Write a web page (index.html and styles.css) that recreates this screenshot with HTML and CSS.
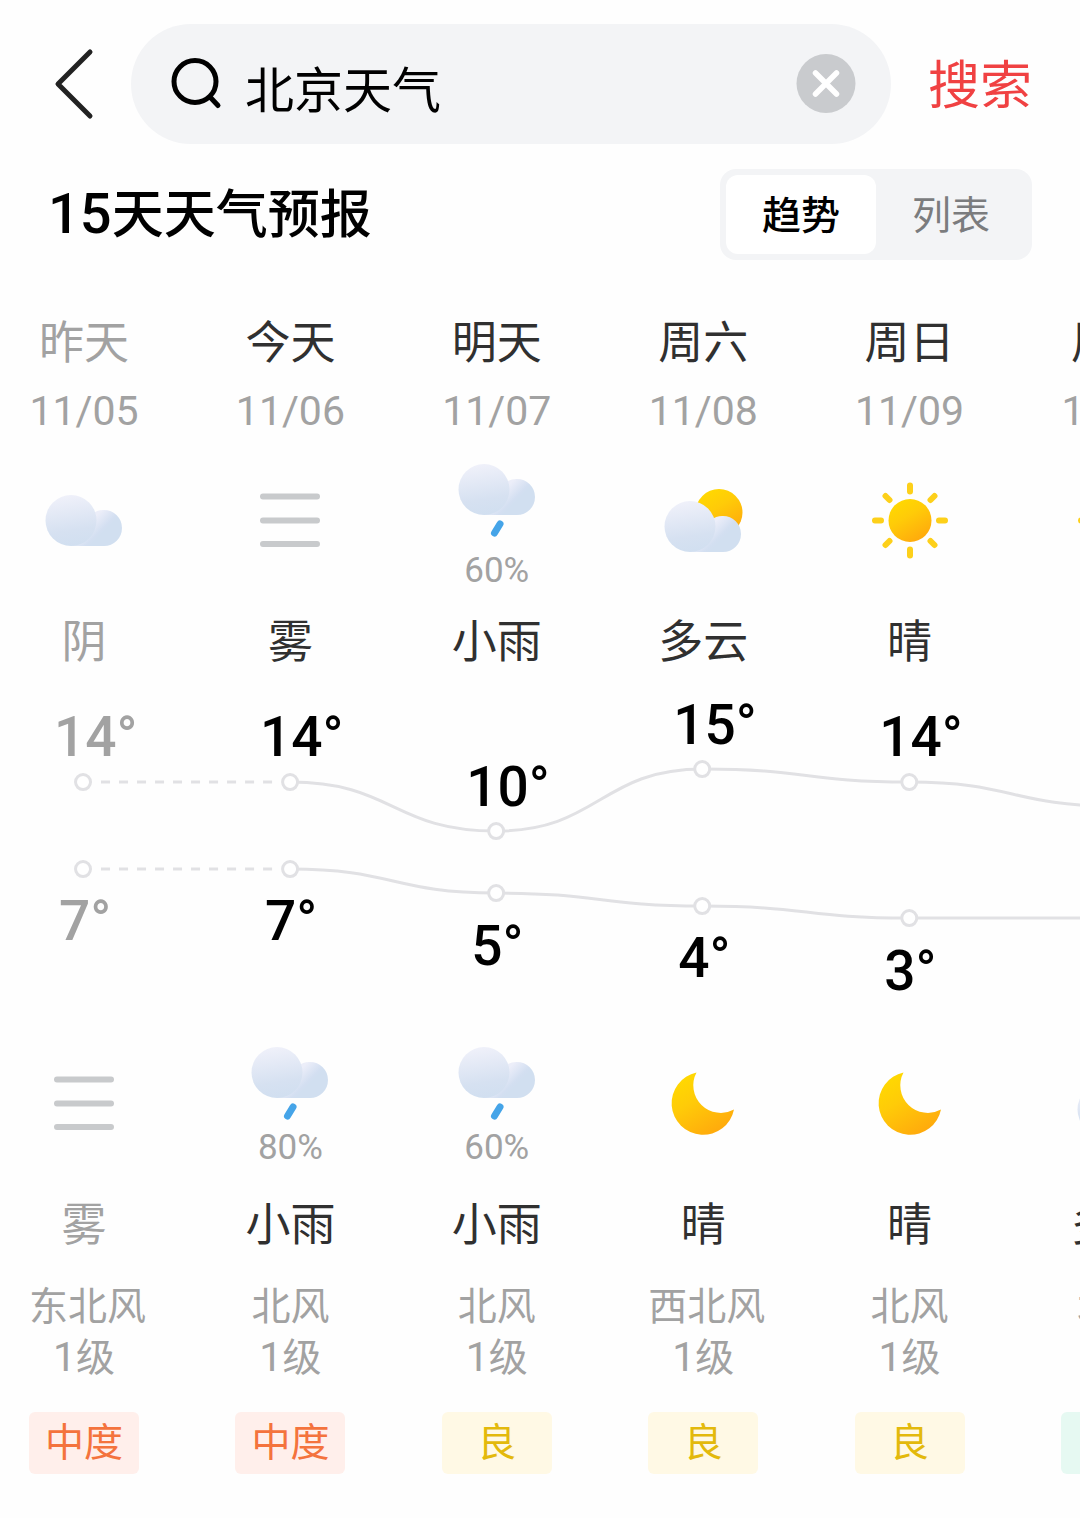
FILE: index.html
```html
<!DOCTYPE html>
<html lang="zh-CN">
<head>
  <meta charset="UTF-8" />
  <meta name="viewport" content="width=device-width, initial-scale=1" />
  <title>北京天气</title>
  <link rel="stylesheet" href="styles.css">
</head>
<body>
  <!-- 天气图标 -->
  <svg class="sprite" width="0" height="0" aria-hidden="true">
    <defs>
      <linearGradient id="gradCloud" x1="0.35" y1="0" x2="0.5" y2="1">
        <stop offset="0" stop-color="#f0f1fa" />
        <stop offset="0.7" stop-color="#d6e1f1" />
        <stop offset="1" stop-color="#d1dff0" />
      </linearGradient>
      <linearGradient id="gradPuff" gradientUnits="userSpaceOnUse" x1="50" y1="38" x2="62" y2="50">
        <stop offset="0" stop-color="#eceef9" />
        <stop offset="0.8" stop-color="#d3dff1" />
        <stop offset="1" stop-color="#d1dff0" />
      </linearGradient>
      <linearGradient id="gradSun" x1="0.2" y1="0" x2="0.8" y2="1">
        <stop offset="0" stop-color="#ffda00" />
        <stop offset="0.4" stop-color="#ffcb08" />
        <stop offset="1" stop-color="#ffa60d" />
      </linearGradient>
      <g id="cloudShape">
        <path d="M27 66L48 34A18 18 0 0 1 60 30A18 18 0 0 1 60 66Z" fill="url(#gradPuff)" />
        <circle cx="27" cy="40.5" r="25.5" fill="url(#gradCloud)" />
      </g>
    </defs>
    <symbol id="cloud" viewBox="0 0 80 80">
      <use href="#cloudShape" />
    </symbol>
    <symbol id="rain" viewBox="0 0 80 80">
      <use href="#cloudShape" y="-11" />
      <path d="M43 64L37.5 73" stroke="#45a4e8" stroke-width="7" stroke-linecap="round" />
    </symbol>
    <symbol id="partly" viewBox="0 0 80 80">
      <circle cx="56" cy="32.5" r="23.5" fill="url(#gradSun)" />
      <use href="#cloudShape" y="6" />
    </symbol>
    <symbol id="sun" viewBox="0 0 80 80">
      <circle cx="40" cy="40.5" r="21.5" fill="url(#gradSun)" />
      <path d="M40 5.5v6M40 69.5v6M5 40.5h6M69 40.5h6M15.5 16l4 4M60.5 61l4 4M15.5 65l4-4M60.5 20l4-4" stroke="#fdd01a" stroke-width="6" stroke-linecap="round" />
    </symbol>
    <symbol id="moon" viewBox="0 0 80 80">
      <path d="M33.5 9.5A31.5 31.5 0 1 0 71 46.5A27.5 27.5 0 0 1 33.5 9.5Z" fill="url(#gradSun)" />
    </symbol>
    <symbol id="fog" viewBox="0 0 80 80">
      <path d="M13 16.5h54M13 40.5h54M13 64h54" stroke="#c8cacc" stroke-width="6" stroke-linecap="round" />
    </symbol>
  </svg>

  <header class="topbar">
    <button class="back" type="button" aria-label="返回">
      <svg width="40" height="72" viewBox="0 0 40 72" fill="none" stroke="#222" stroke-width="5" stroke-linecap="round" stroke-linejoin="round">
        <path d="M36 4L4 36L36 68" />
      </svg>
    </button>
    <form class="search" id="searchForm">
      <svg width="52" height="52" viewBox="0 0 52 52" fill="none" stroke="#000" stroke-width="5" stroke-linecap="round">
        <circle cx="24" cy="23.5" r="21" />
        <path d="M39.5 39.5L47 47.5" />
      </svg>
      <input type="text" value="北京天气" aria-label="搜索内容">
      <button class="clear" type="reset" aria-label="清除">
        <svg width="60" height="60" viewBox="0 0 60 60">
          <circle cx="30" cy="29.5" r="29.5" fill="#c9cbce" />
          <path d="M19.5 19L40.5 40M40.5 19L19.5 40" stroke="#fff" stroke-width="5.5" stroke-linecap="round" />
        </svg>
      </button>
    </form>
    <button class="submit" type="submit" form="searchForm">搜索</button>
  </header>

  <main>
    <div class="heading">
      <h1><span class="num">15</span>天天气预报</h1>
      <div class="toggle">
        <button class="active" type="button" aria-pressed="true">趋势</button>
        <button type="button" aria-pressed="false">列表</button>
      </div>
    </div>

    <div class="forecast">
      <!-- 白天 -->
      <div class="days">
        <section class="day past">
          <h2>昨天</h2>
          <p class="date">11/05</p>
          <div class="sky"><svg class="icon"><use href="#cloud" /></svg></div>
          <p class="name">阴</p>
        </section>
        <section class="day">
          <h2>今天</h2>
          <p class="date">11/06</p>
          <div class="sky"><svg class="icon"><use href="#fog" /></svg></div>
          <p class="name">雾</p>
        </section>
        <section class="day">
          <h2>明天</h2>
          <p class="date">11/07</p>
          <div class="sky wet"><svg class="icon"><use href="#rain" /></svg><span class="chance">60%</span></div>
          <p class="name">小雨</p>
        </section>
        <section class="day">
          <h2>周六</h2>
          <p class="date">11/08</p>
          <div class="sky"><svg class="icon"><use href="#partly" /></svg></div>
          <p class="name">多云</p>
        </section>
        <section class="day">
          <h2>周日</h2>
          <p class="date">11/09</p>
          <div class="sky"><svg class="icon"><use href="#sun" /></svg></div>
          <p class="name">晴</p>
        </section>
        <section class="day">
          <h2>周一</h2>
          <p class="date">11/10</p>
          <div class="sky"><svg class="icon"><use href="#sun" /></svg></div>
          <p class="name">晴</p>
        </section>
      </div>

      <!-- 气温曲线 -->
      <svg class="chart" viewBox="0 3 1238 360">
        <g class="line">
          <path class="dashed" d="M72 112H244M72 199H244" />
          <path d="M261 112C364 112 364 161 467 161S571 99 674 99S777 112 880 112S983 136 1086 136" />
          <path d="M261 199C364 199 364 223 467 223S571 236 674 236S777 248 880 248H1086" />
        </g>
        <g class="dots">
          <circle cx="54" cy="112" r="7.5" /><circle cx="261" cy="112" r="7.5" /><circle cx="467" cy="161" r="7.5" />
          <circle cx="673" cy="99" r="7.5" /><circle cx="880" cy="112" r="7.5" /><circle cx="1086" cy="136" r="7.5" />
          <circle cx="54" cy="199" r="7.5" /><circle cx="261" cy="199" r="7.5" /><circle cx="467" cy="223" r="7.5" />
          <circle cx="673" cy="236" r="7.5" /><circle cx="880" cy="248" r="7.5" /><circle cx="1086" cy="248" r="7.5" />
        </g>
        <g class="temp">
          <text class="old" x="25" y="86">14°</text>
          <text x="231" y="86">14°</text>
          <text x="437" y="136">10°</text>
          <text x="644" y="74">15°</text>
          <text x="850" y="86">14°</text>
          <text x="1056" y="111">12°</text>
          <text class="old" x="30" y="270">7°</text>
          <text x="236" y="270">7°</text>
          <text x="442" y="295">5°</text>
          <text x="649" y="307">4°</text>
          <text x="855" y="320">3°</text>
          <text x="1061" y="320">3°</text>
        </g>
      </svg>

      <!-- 夜间 -->
      <div class="days night">
        <section class="day past">
          <div class="sky"><svg class="icon"><use href="#fog" /></svg></div>
          <p class="name">雾</p>
          <p class="wind">东北风<br><span class="num">1</span>级</p>
          <p class="aqi moderate">中度</p>
        </section>
        <section class="day">
          <div class="sky wet"><svg class="icon"><use href="#rain" /></svg><span class="chance">80%</span></div>
          <p class="name">小雨</p>
          <p class="wind">北风<br><span class="num">1</span>级</p>
          <p class="aqi moderate">中度</p>
        </section>
        <section class="day">
          <div class="sky wet"><svg class="icon"><use href="#rain" /></svg><span class="chance">60%</span></div>
          <p class="name">小雨</p>
          <p class="wind">北风<br><span class="num">1</span>级</p>
          <p class="aqi good">良</p>
        </section>
        <section class="day">
          <div class="sky"><svg class="icon"><use href="#moon" /></svg></div>
          <p class="name">晴</p>
          <p class="wind">西北风<br><span class="num">1</span>级</p>
          <p class="aqi good">良</p>
        </section>
        <section class="day">
          <div class="sky"><svg class="icon"><use href="#moon" /></svg></div>
          <p class="name">晴</p>
          <p class="wind">北风<br><span class="num">1</span>级</p>
          <p class="aqi good">良</p>
        </section>
        <section class="day">
          <div class="sky"><svg class="icon"><use href="#partly" /></svg></div>
          <p class="name">多云</p>
          <p class="wind">北风<br><span class="num">1</span>级</p>
          <p class="aqi best">优</p>
        </section>
      </div>
    </div>
  </main>
</body>
</html>
```
FILE: styles.css
```css
* {
  box-sizing: border-box;
}
body {
  margin: 0;
  background: #fefefe;
  color: #000;
  font-family: Roboto, "Noto Sans CJK SC", sans-serif;
}
h1, h2, p {
  margin: 0;
  font-weight: 400;
}
button {
  padding: 0;
  border: 0;
  background: none;
  font-family: inherit;
  cursor: pointer;
}
svg {
  display: block;
}
.sprite {
  position: absolute;
}

/* 顶部搜索栏 */
.topbar {
  display: flex;
  align-items: center;
  gap: 37px;
  padding: 24px 48px 0 54px;
}
.search {
  flex: 1;
  display: flex;
  align-items: center;
  min-width: 0;
  height: 120px;
  padding: 0 35px 0 40px;
  border-radius: 60px;
  background: #f3f4f6;
}
.search input {
  flex: 1;
  min-width: 0;
  height: 80px;
  margin: 0 20px 0 22px;
  padding: 4px 0 0;
  border: 0;
  outline: 0;
  background: none;
  color: #000;
  font-family: inherit;
  font-size: 49px;
}
.submit {
  padding-top: 6px;
  color: #f04142;
  font-size: 52px;
  line-height: 72px;
}

.heading {
  display: flex;
  align-items: center;
  justify-content: space-between;
  padding: 25px 48px 0;
}
h1 {
  font-size: 52px;
  font-weight: 500;
  line-height: 72px;
}
h1 .num {
  font-size: 56px;
}
.toggle {
  display: flex;
  padding: 6px;
  border-radius: 16px;
  background: #f3f4f6;
}
.toggle button {
  width: 150px;
  height: 79px;
  padding-bottom: 6px;
  border-radius: 12px;
  color: #7b7c7e;
  font-size: 39px;
}
.toggle .active {
  background: #fff;
  color: #000;
  font-weight: 500;
}

/* 一屏显示五天多一点 */
.forecast {
  --col: calc((100vw - 48px) / 5);
  overflow-x: auto;
  scrollbar-width: none;
  padding: 54px 0 44px 29px;
}
.days {
  display: grid;
  grid-template-columns: repeat(6, var(--col));
}
.day {
  width: 110px;
  text-align: center;
  white-space: nowrap;
}
h2, .name {
  color: #303030;
  font-size: 45px;
  line-height: 60px;
}
.date {
  margin-top: 12px;
  color: #a2a2a2;
  font-size: 41px;
  line-height: 50px;
}
.sky {
  display: flex;
  flex-direction: column;
  align-items: center;
  height: 163px;
  margin-top: 14px;
  padding-top: 30px;
}
.sky.wet {
  padding-top: 10px;
}
.icon {
  width: 80px;
  height: 80px;
}
.chance {
  margin-top: 11px;
  color: #a2a2a2;
  font-size: 35px;
  line-height: 40px;
}
.past h2, .past .name {
  color: #a2a2a2;
}

.chart {
  width: calc(var(--col) * 6);
  height: auto;
}
.line, .dots {
  fill: none;
  stroke: #e1e1e4;
  stroke-width: 3;
}
.dots {
  fill: #fff;
}
.dashed {
  stroke-dasharray: 9;
}
.temp {
  font-size: 55px;
  font-weight: 500;
}
.temp .old {
  fill: #a2a2a2;
}

.night .sky {
  margin-top: 0;
}
.night .chance {
  margin-top: 5px;
}
.wind {
  margin-top: 26px;
  color: #a2a2a2;
  font-size: 39px;
  line-height: 50px;
}
.wind .num {
  font-size: 41px;
}
.aqi {
  margin-top: 29px;
  border-radius: 6px;
  font-size: 39px;
  line-height: 62px;
}
.moderate {
  background: #ffefeb;
  color: #f4733d;
}
.good {
  background: #fff9e5;
  color: #e3b90c;
}
.best {
  background: #e6f9f2;
  color: #2fb98a;
}
```
